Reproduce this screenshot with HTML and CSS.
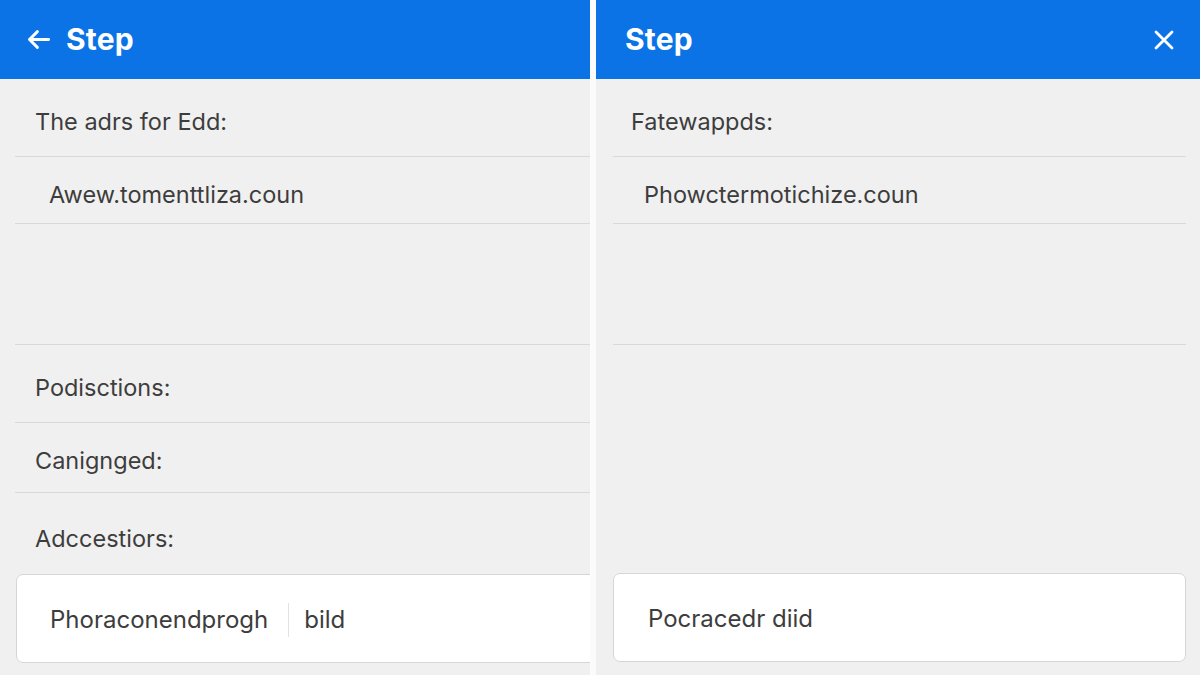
FILE: index.html
```html
<!DOCTYPE html>
<html lang="en">
<head>
<meta charset="utf-8">
<title>Step</title>
<link rel="stylesheet" href="styles.css">
</head>
<body>
<div class="screens">
  <section class="panel panel-left">
    <header class="bar">
      <svg class="bar-icon back" viewBox="0 0 24 24" width="27" height="27" aria-hidden="true">
        <path d="M21 12H4M11 5l-7 7 7 7" fill="none" stroke="#fff" stroke-width="2.6" stroke-linecap="round" stroke-linejoin="round"/>
      </svg>
      <h1 class="bar-title">Step</h1>
    </header>
    <div class="content">
      <div class="row row-label r1">The adrs for Edd:</div>
      <div class="row row-value r2">Awew.tomenttliza.coun</div>
      <div class="row row-blank"></div>
      <div class="row row-label r3">Podisctions:</div>
      <div class="row row-label r4">Canignged:</div>
      <div class="row row-label r5 last">Adccestiors:</div>
      <div class="box box-left">
        <span class="box-text">Phoraconendprogh</span>
        <span class="box-sep"></span>
        <span class="box-text">bild</span>
      </div>
    </div>
  </section>
  <section class="panel panel-right">
    <header class="bar">
      <h1 class="bar-title">Step</h1>
      <svg class="bar-icon close" viewBox="0 0 24 24" width="24" height="24" aria-hidden="true">
        <path d="M4 4l16 16M20 4L4 20" fill="none" stroke="#fff" stroke-width="2.8" stroke-linecap="round"/>
      </svg>
    </header>
    <div class="content">
      <div class="row row-label r1">Fatewappds:</div>
      <div class="row row-value r2">Phowctermotichize.coun</div>
      <div class="row row-blank"></div>
      <div class="fill"></div>
      <div class="box box-right">
        <span class="box-text">Pocracedr diid</span>
      </div>
    </div>
  </section>
</div>
</body>
</html>
```
FILE: styles.css
```css
* { box-sizing: border-box; margin: 0; padding: 0; }

html, body {
  width: 1200px;
  height: 675px;
  overflow: hidden;
}

body {
  background: #fbfbfb;
  font-family: Inter, "Liberation Sans", Arial, sans-serif;
  color: #3d3d3d;
}

.screens {
  display: flex;
  gap: 6px;
  height: 675px;
}

.panel {
  background: #f0f0f0;
  display: flex;
  flex-direction: column;
  overflow: hidden;
}

.panel-left { width: 590px; }
.panel-right { flex: 1; }

.bar {
  height: 79px;
  flex: none;
  background: #0b73e6;
  display: flex;
  align-items: center;
  color: #fff;
}

.panel-left .bar { padding-left: 25px; }
.panel-right .bar { padding: 0 24px 0 29px; justify-content: space-between; }

.bar-icon { display: block; }
.back { margin-right: 14px; }

.bar-title {
  font-size: 30px;
  font-weight: 700;
  letter-spacing: 0.2px;
  line-height: 1;
  padding-bottom: 1px;
}

.content {
  flex: 1;
  display: flex;
  flex-direction: column;
}

.panel-left .content { padding-left: 15px; }
.panel-right .content { padding: 0 14px 13px 17px; }

.row {
  display: flex;
  align-items: center;
  border-bottom: 1px solid #d9d9d9;
  font-size: 23.5px;
  line-height: 1;
  flex: none;
}

.row.last { border-bottom: none; }

.row-label { padding-left: 20px; }
.row-value { padding-left: 34px; }
.panel-right .row-label { padding-left: 18px; }
.panel-right .row-value { padding-left: 31px; }

.r1 { height: 78px; padding-top: 8px; }
.r2 { height: 67px; padding-top: 10px; }
.row-blank { height: 121px; }
.r3 { height: 78px; padding-top: 9px; }
.r4 { height: 70px; padding-top: 6px; }
.r5 { height: 81px; padding-top: 10px; }

.fill { flex: 1; }

.box {
  height: 89px;
  background: #fff;
  border: 1px solid #d6d6d6;
  border-radius: 7px;
  display: flex;
  align-items: center;
  font-size: 24px;
  line-height: 1;
  flex: none;
  padding-top: 3px;
}

.box-left {
  margin-left: 1px;
  margin-right: -20px;
  padding-left: 33px;
}

.box-right { padding-left: 34px; }

.box-sep {
  width: 1px;
  height: 34px;
  background: #e2e2e2;
  margin: 0 15px 0 20px;
}
```
